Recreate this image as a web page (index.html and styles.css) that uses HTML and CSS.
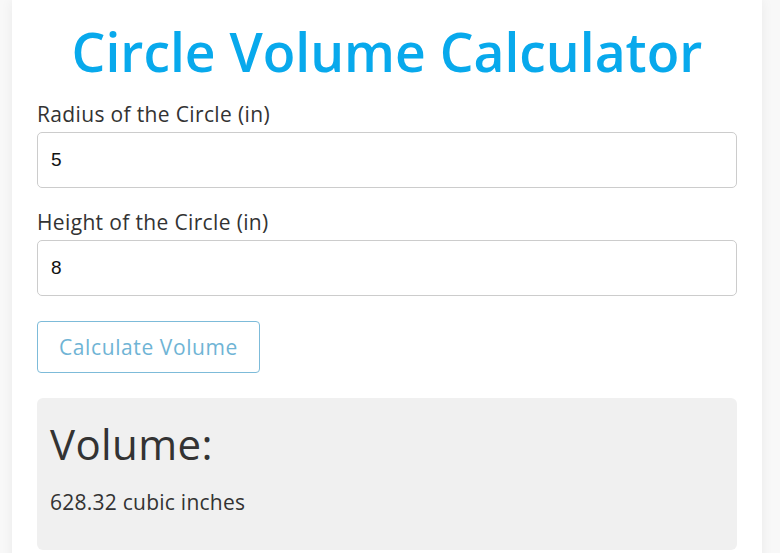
FILE: index.html
```html
<!DOCTYPE html>
<html lang="en">
<head>
  <meta charset="UTF-8">
  <title>Circle Volume Calculator</title>
  <link rel="stylesheet" href="styles.css">
</head>
<body>

<div class="container">
  <h1>Circle Volume Calculator</h1>

  <div class="field">
    <label for="radius">Radius of the Circle (in)</label>
    <input type="number" id="radius" value="5">
  </div>

  <div class="field">
    <label for="height">Height of the Circle (in)</label>
    <input type="number" id="height" value="8">
  </div>

  <button onclick="calculate()">Calculate Volume</button>

  <div class="result">
    <h2>Volume:</h2>
    <p id="volume">628.32 cubic inches</p>
  </div>
</div>

<script>
  function calculate() {
    const r = parseFloat(document.getElementById('radius').value) || 0;
    const h = parseFloat(document.getElementById('height').value) || 0;
    const v = Math.PI * r * r * h;
    document.getElementById('volume').textContent = v.toFixed(2) + ' cubic inches';
  }
</script>

</body>
</html>
```

FILE: styles.css
```css
body {
  font-family: 'Open Sans', sans-serif;
  margin: 0;
  background: #f8f8f8;
  color: #333;
}
.container {
  width: 700px;
  margin-left: 12px;
  padding: 20px 25px 25px;
  background: white;
  box-shadow: 0 0 12px rgba(0,0,0,0.06);
}
h1 {
  margin: 0 0 15px;
  font-size: 53.4px;
  font-weight: 600;
  line-height: 1.2;
  text-align: center;
  color: #08a9ec;
}
.field {
  margin-bottom: 19.5px;
}
label {
  display: block;
  margin-bottom: 1px;
  font-size: 21px;
  line-height: 1.5;
  letter-spacing: 0.35px;
}
input {
  box-sizing: border-box;
  width: 100%;
  height: 56px;
  padding: 0 13px;
  border: 1px solid #ccc;
  border-radius: 5px;
  font-family: 'Liberation Sans', sans-serif;
  font-size: 19px;
  color: #111;
}
button {
  height: 52px;
  padding: 0 21px;
  margin-top: 5.5px;
  background: white;
  border: 1px solid #7dbbd9;
  border-radius: 4px;
  font-family: 'Open Sans', sans-serif;
  font-size: 21px;
  letter-spacing: 0.6px;
  color: #6fb4d5;
  cursor: pointer;
}
.result {
  margin-top: 25px;
  padding: 21px 13px 32px;
  background: #f0f0f0;
  border-radius: 6px;
}
.result h2 {
  margin: 0 0 18px;
  font-size: 42px;
  font-weight: 500;
  line-height: 1.2;
  letter-spacing: 0.4px;
}
.result p {
  margin: 0;
  font-size: 21px;
  line-height: 1.5;
  letter-spacing: 0.25px;
}
```
